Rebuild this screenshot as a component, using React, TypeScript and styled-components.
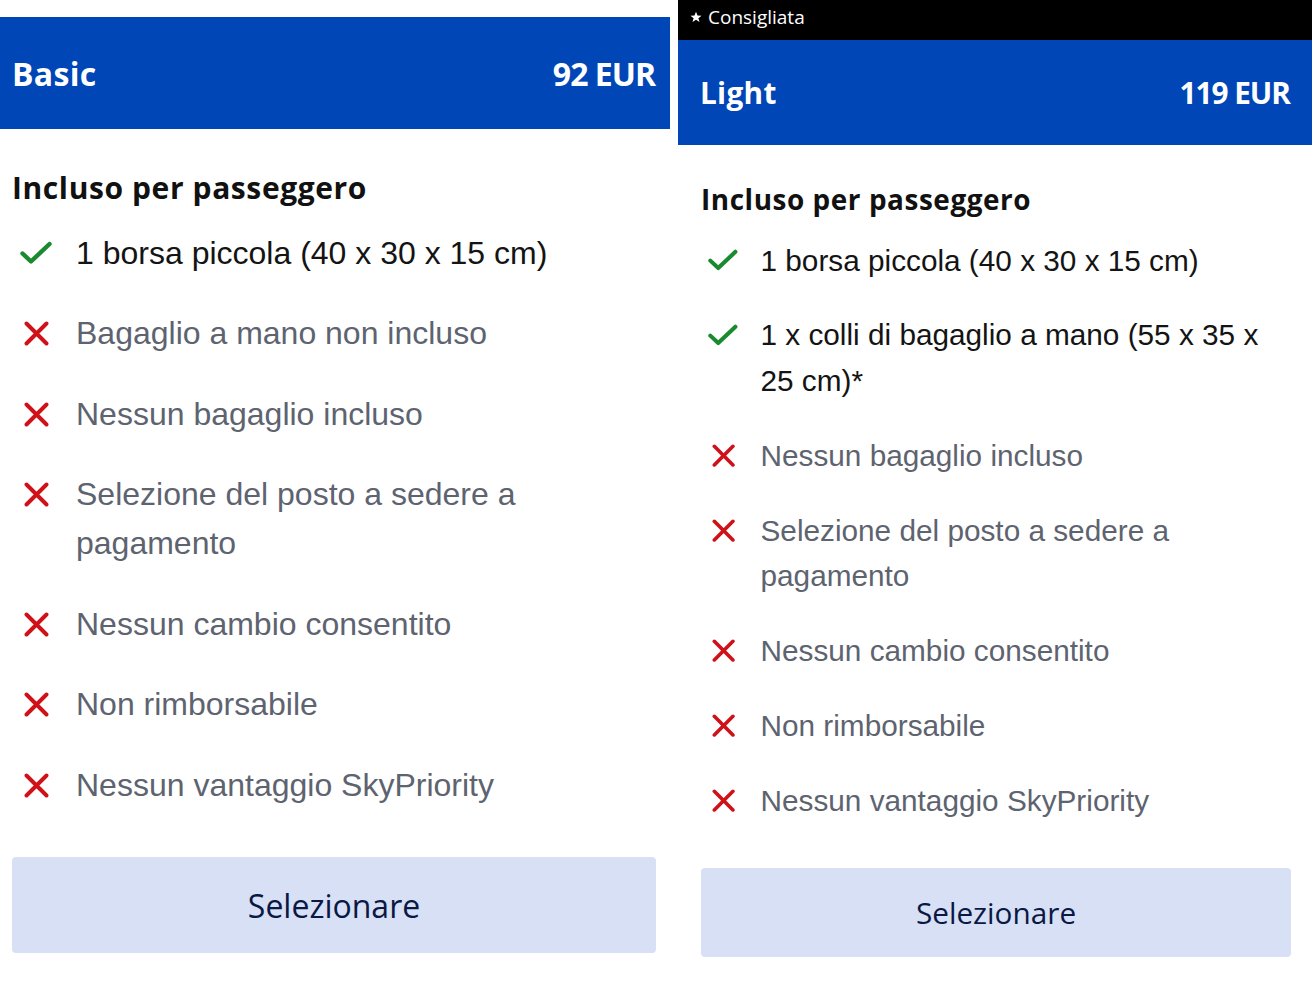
import React from "react";
import styled, { createGlobalStyle } from "styled-components";

const Global = createGlobalStyle`
  html, body { margin: 0; padding: 0; background: #ffffff; }
  body { font-family: "Open Sans", "Noto Sans", sans-serif; }
  * { box-sizing: border-box; }
`;

type S = { $s: number };
type Pad = { $padL: number; $padR: number };
const sc = (n: number) => (p: S) => `${(n * p.$s).toFixed(2)}px`;

const Page = styled.div`
  display: flex;
  align-items: flex-start;
  gap: 8px;
  width: 1312px;
  height: 984px;
  overflow: hidden;
`;

const Card = styled.section<{ $w: number; $top: number }>`
  flex: none;
  width: ${(p) => p.$w}px;
  padding-top: ${(p) => p.$top}px;
  display: flex;
  flex-direction: column;
`;

const Badge = styled.div`
  height: 40px;
  background: #000000;
  color: #ffffff;
  display: flex;
  align-items: center;
  gap: 6px;
  padding: 0 0 6px 12px;
  font-size: 19px;
  line-height: 1;
`;

const Header = styled.header<S & Pad & { $h: number }>`
  height: ${(p) => p.$h}px;
  background: #0046b6;
  color: #ffffff;
  display: flex;
  align-items: center;
  justify-content: space-between;
  padding: 0 ${(p) => p.$padR}px 0 ${(p) => p.$padL}px;
  font-weight: 700;
  font-size: ${sc(32)};
`;

const Name = styled.span`
  letter-spacing: 0.3px;
`;

const Price = styled.span`
  letter-spacing: -1px;
`;

const Body = styled.div<S & Pad>`
  display: flex;
  flex-direction: column;
  padding: 0 ${(p) => p.$padR}px 0 ${(p) => p.$padL}px;
`;

const Heading = styled.h2<S>`
  margin: ${sc(39)} 0 0;
  font-size: ${sc(30)};
  line-height: ${sc(40)};
  font-weight: 700;
  letter-spacing: ${sc(0.6)};
  color: #111111;
`;

const List = styled.ul<S>`
  list-style: none;
  margin: ${sc(20.5)} 0 0;
  padding: 0;
  display: flex;
  flex-direction: column;
  gap: ${sc(31.5)};
`;

const Item = styled.li<S & { $ok: boolean }>`
  display: flex;
  align-items: flex-start;
  font-family: "Liberation Sans", Arial, sans-serif;
  font-size: ${sc(32)};
  line-height: ${sc(49)};
  color: ${(p) => (p.$ok ? "#141414" : "#5e6370")};
`;

const IconBox = styled.span<S>`
  flex: none;
  width: ${sc(32)};
  height: ${sc(49)};
  margin: 0 ${sc(24)} 0 ${sc(8)};
  display: flex;
  align-items: center;
  justify-content: center;
`;

const Button = styled.button<S>`
  margin-top: ${sc(47.5)};
  width: 100%;
  height: ${sc(96)};
  border: none;
  border-radius: 4px;
  background: #d7e0f4;
  color: #0a1845;
  font-family: "Open Sans", "Noto Sans", sans-serif;
  font-size: ${sc(32)};
  font-weight: 400;
  cursor: pointer;
`;

const Check = ({ s }: { s: number }) => (
  <svg width={32 * s} height={24 * s} viewBox="0 0 32 24">
    <path d="M2.5 12.5 L11 20.5 L29.5 3" fill="none" stroke="#1a8a2f" strokeWidth="4.4" strokeLinecap="round" strokeLinejoin="round" />
  </svg>
);

const Cross = ({ s }: { s: number }) => (
  <svg width={25 * s} height={25 * s} viewBox="0 0 25 25">
    <path d="M2.5 2.5 L22.5 22.5 M22.5 2.5 L2.5 22.5" fill="none" stroke="#cf1119" strokeWidth="3.9" strokeLinecap="round" />
  </svg>
);

const Star = () => (
  <svg width="12" height="12" viewBox="0 0 24 24">
    <path d="M12 1.5 L15 9 L23 9.3 L16.8 14.3 L19 22.2 L12 17.6 L5 22.2 L7.2 14.3 L1 9.3 L9 9 Z" fill="#ffffff" />
  </svg>
);

type Feature = { ok: boolean; text: string };

const basic: Feature[] = [
  { ok: true, text: "1 borsa piccola (40 x 30 x 15 cm)" },
  { ok: false, text: "Bagaglio a mano non incluso" },
  { ok: false, text: "Nessun bagaglio incluso" },
  { ok: false, text: "Selezione del posto a sedere a pagamento" },
  { ok: false, text: "Nessun cambio consentito" },
  { ok: false, text: "Non rimborsabile" },
  { ok: false, text: "Nessun vantaggio SkyPriority" },
];

const light: Feature[] = [
  { ok: true, text: "1 borsa piccola (40 x 30 x 15 cm)" },
  { ok: true, text: "1 x colli di bagaglio a mano (55 x 35 x 25 cm)*" },
  { ok: false, text: "Nessun bagaglio incluso" },
  { ok: false, text: "Selezione del posto a sedere a pagamento" },
  { ok: false, text: "Nessun cambio consentito" },
  { ok: false, text: "Non rimborsabile" },
  { ok: false, text: "Nessun vantaggio SkyPriority" },
];

type FareProps = {
  name: string;
  price: string;
  features: Feature[];
  s: number;
  w: number;
  top: number;
  headH: number;
  headPad: [number, number];
  bodyPad: [number, number];
  recommended?: boolean;
};

const Fare = ({ name, price, features, s, w, top, headH, headPad, bodyPad, recommended }: FareProps) => (
  <Card $w={w} $top={top}>
    {recommended && (
      <Badge>
        <Star />
        <span>Consigliata</span>
      </Badge>
    )}
    <Header $s={s} $h={headH} $padL={headPad[0]} $padR={headPad[1]}>
      <Name>{name}</Name>
      <Price>{price}</Price>
    </Header>
    <Body $s={s} $padL={bodyPad[0]} $padR={bodyPad[1]}>
      <Heading $s={s}>Incluso per passeggero</Heading>
      <List $s={s}>
        {features.map((f, i) => (
          <Item key={i} $s={s} $ok={f.ok}>
            <IconBox $s={s}>{f.ok ? <Check s={s} /> : <Cross s={s} />}</IconBox>
            <span>{f.text}</span>
          </Item>
        ))}
      </List>
      <Button $s={s}>Selezionare</Button>
    </Body>
  </Card>
);

export default function App() {
  return (
    <>
      <Global />
      <Page>
        <Fare name="Basic" price="92 EUR" features={basic} s={1} w={670} top={17} headH={112} headPad={[12, 15]} bodyPad={[12, 14]} />
        <Fare name="Light" price="119 EUR" features={light} s={0.93} w={634} top={0} headH={105} headPad={[22, 22]} bodyPad={[23, 21]} recommended />
      </Page>
    </>
  );
}
